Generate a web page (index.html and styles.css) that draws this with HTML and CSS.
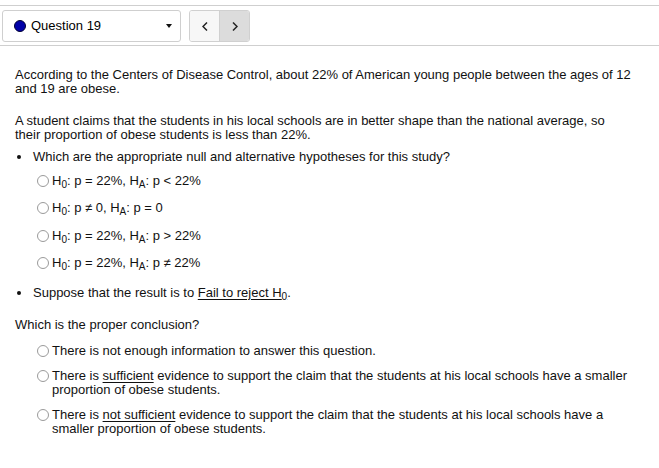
FILE: index.html
```html
<!DOCTYPE html>
<html>
<head>
<meta charset="utf-8">
<link rel="stylesheet" href="styles.css">
</head>
<body>
<div class="toolbar">
  <div class="select">
    <span class="dot"></span>
    <span class="qlabel">Question 19</span>
    <span class="caret"></span>
  </div>
  <div class="nav">
    <span class="navbtn prev"><svg width="6" height="9" viewBox="0 0 6 9"><path d="M5 0.5 L1 4.5 L5 8.5" fill="none" stroke="#222" stroke-width="1.5"/></svg></span>
    <span class="navbtn next"><svg width="6" height="9" viewBox="0 0 6 9"><path d="M1 0.5 L5 4.5 L1 8.5" fill="none" stroke="#222" stroke-width="1.5"/></svg></span>
  </div>
</div>
<div class="content">
  <p class="p1">According to the Centers of Disease Control, about 22% of American young people between the ages of 12 and 19 are obese.</p>
  <p class="p2">A student claims that the students in his local schools are in better shape than the national average, so their proportion of obese students is less than 22%.</p>
  <div class="bullet b1"><span class="bdot"></span><span>Which are the appropriate null and alternative hypotheses for this study?</span></div>
  <div class="hyp">
    <div class="opt"><span class="radio"></span><span>H<sub>0</sub>: p = 22%, H<sub>A</sub>: p &lt; 22%</span></div>
    <div class="opt"><span class="radio"></span><span>H<sub>0</sub>: p &ne; 0, H<sub>A</sub>: p = 0</span></div>
    <div class="opt"><span class="radio"></span><span>H<sub>0</sub>: p = 22%, H<sub>A</sub>: p &gt; 22%</span></div>
    <div class="opt"><span class="radio"></span><span>H<sub>0</sub>: p = 22%, H<sub>A</sub>: p &ne; 22%</span></div>
  </div>
  <div class="bullet b2"><span class="bdot"></span><span>Suppose that the result is to <u>Fail to reject H<sub>0</sub></u>.</span></div>
  <p class="p3">Which is the proper conclusion?</p>
  <div class="concl">
    <div class="copt"><span class="radio"></span><span class="ctext">There is not enough information to answer this question.</span></div>
    <div class="copt"><span class="radio"></span><span class="ctext">There is <u>sufficient</u> evidence to support the claim that the students at his local schools have a smaller proportion of obese students.</span></div>
    <div class="copt"><span class="radio"></span><span class="ctext">There is <u>not sufficient</u> evidence to support the claim that the students at his local schools have a smaller proportion of obese students.</span></div>
  </div>
</div>
</body>
</html>
```
FILE: styles.css
```css
html, body {
  margin: 0;
  padding: 0;
  background: #fff;
}
body {
  font-family: "Liberation Sans", Arial, sans-serif;
  font-size: 13px;
  line-height: 14px;
  color: #111;
}
.toolbar {
  margin-top: 5px;
  border-top: 1px solid #cfcfcf;
  border-bottom: 1px solid #cfcfcf;
  padding: 4px 0 3px 2px;
  display: flex;
  align-items: center;
  gap: 8px;
}
.select {
  width: 177px;
  height: 30px;
  border: 1px solid #cfcfcf;
  border-radius: 3px;
  display: flex;
  align-items: center;
}
.dot {
  width: 10px;
  height: 10px;
  border-radius: 50%;
  background: #0000a8;
  border: 1px solid #000033;
  margin-left: 11px;
  margin-right: 5px;
}
.qlabel {
  color: #000;
}
.caret {
  margin-left: auto;
  margin-right: 8px;
  width: 0;
  height: 0;
  border-left: 3.5px solid transparent;
  border-right: 3.5px solid transparent;
  border-top: 4px solid #111;
}
.nav {
  display: flex;
  height: 30px;
  border: 1px solid #d0d0d0;
  border-radius: 3px;
  overflow: hidden;
}
.navbtn {
  width: 29px;
  display: flex;
  align-items: center;
  justify-content: center;
}
.prev {
  background: #f7f7f7;
  border-right: 1px solid #d0d0d0;
}
.next {
  background: #dcdcdc;
}
.content {
  padding: 0 28px 0 15px;
}
p {
  margin: 0;
}
.p1 {
  margin-top: 22px;
}
.p2 {
  margin-top: 18px;
}
.bullet {
  display: flex;
  align-items: center;
}
.bdot {
  flex: none;
  width: 4px;
  height: 4px;
  border-radius: 50%;
  background: #111;
  margin-left: 2px;
  margin-right: 12px;
}
.b1 {
  margin-top: 8px;
}
.hyp {
  margin-top: 10px;
  padding-left: 22px;
}
.opt {
  display: flex;
  align-items: center;
  height: 14px;
  margin-bottom: 13.4px;
}
.opt:last-child {
  margin-bottom: 0;
}
.radio {
  flex: none;
  box-sizing: border-box;
  width: 12px;
  height: 12px;
  border: 1px solid #9a9a9a;
  border-radius: 50%;
  background: #fff;
  margin-right: 3px;
}
sub {
  font-size: 10px;
  line-height: 0;
  vertical-align: -3px;
}
.b2 {
  margin-top: 16px;
}
.p3 {
  margin-top: 18px;
}
.concl {
  margin-top: 12px;
  padding-left: 22px;
}
.copt {
  display: flex;
  align-items: flex-start;
  margin-bottom: 11px;
}
.copt .radio {
  margin-top: 1px;
}
.ctext {
  flex: 1;
}
u {
  text-underline-offset: 2px;
}
```
